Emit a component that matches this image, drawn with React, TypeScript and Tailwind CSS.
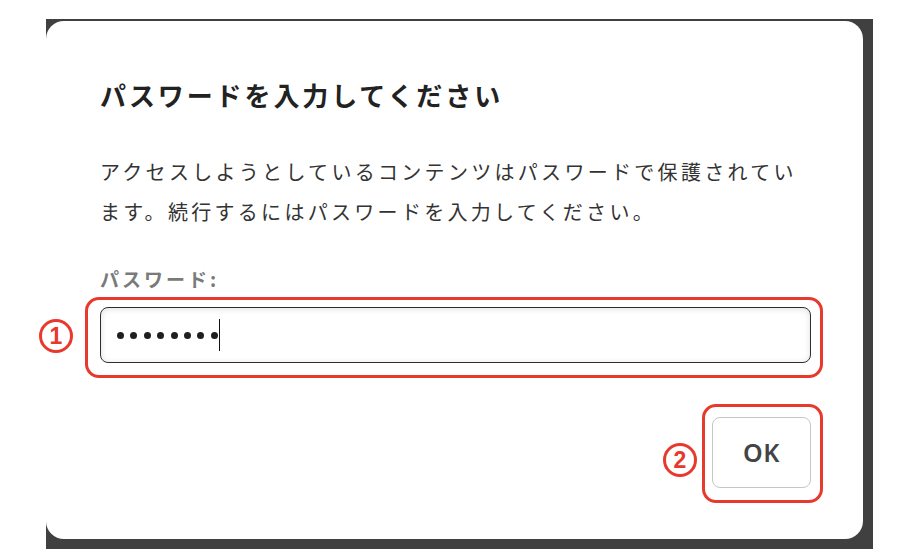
const jp = { fontFamily: '"Noto Sans CJK JP", "Noto Sans", sans-serif' }

function Mark({ n, className }: { n: string; className: string }) {
  return (
    <div
      className={`absolute w-[34px] h-[34px] rounded-full border-[3.5px] border-[#e8392d] flex items-center justify-center text-[23px] leading-none font-bold text-[#e8392d] ${className}`}
      style={{ fontFamily: '"Liberation Sans", Arial, sans-serif' }}
    >
      {n}
    </div>
  )
}

export default function App() {
  return (
    <div className="w-[902px] h-[560px] bg-white overflow-hidden" style={jp}>
      <div className="ml-[46px] mt-[19px] w-[827px] h-[530px] bg-[#404040] pt-[2px] pr-[10px] pb-[10px]">
        <div className="h-full bg-white rounded-[18px] pl-[54px] pr-[52px] pt-[56px] flex flex-col">
          <h1 className="text-[26px] leading-[36px] font-bold tracking-[2.9px] text-[#222]">パスワードを入力してください</h1>

          <p className="mt-[39px] text-[20px] leading-[40px] tracking-[3.3px] text-[#333]">
            アクセスしようとしているコンテンツはパスワードで保護されてい
            <br />
            ます。続行するにはパスワードを入力してください。
          </p>

          <label className="mt-[33px] text-[19px] leading-[28px] font-bold tracking-[3px] text-[#7a7a7a]">パスワード:</label>

          <div className="relative mt-[14px]">
            <div className="absolute left-[-15px] top-[-10px] right-[-12px] bottom-[-15px] border-[3px] border-[#e8392d] rounded-[14px]" />
            <Mark n="1" className="left-[-61px] top-[12px]" />
            <div className="relative h-[56px] border-[1.5px] border-[#2e2e2e] rounded-[8px] bg-white shadow-[inset_0_1px_6px_rgba(0,0,0,0.13)] flex items-center pl-[16px]">
              <div className="flex items-center gap-[6.4px]">
                {Array.from({ length: 8 }, (_, i) => (
                  <span key={i} className="w-[7px] h-[7px] rounded-full bg-[#1f1f1f]" />
                ))}
              </div>
              <span className="ml-[1px] w-[1.5px] h-[32px] bg-[#111]" />
            </div>
          </div>

          <div className="mt-[54px] flex justify-end">
            <div className="relative">
              <div className="absolute left-[-10px] top-[-13px] right-[-12px] bottom-[-15px] border-[3px] border-[#e8392d] rounded-[14px]" />
              <Mark n="2" className="left-[-49px] top-[26px]" />
              <button
                className="relative w-[99px] h-[71px] border-[1.5px] border-[#c6c6c6] rounded-[8px] bg-white text-[25px] font-semibold text-[#444] tracking-[0.5px]"
                style={{ fontFamily: '"Noto Sans", "Open Sans", sans-serif' }}
              >
                OK
              </button>
            </div>
          </div>
        </div>
      </div>
    </div>
  )
}
